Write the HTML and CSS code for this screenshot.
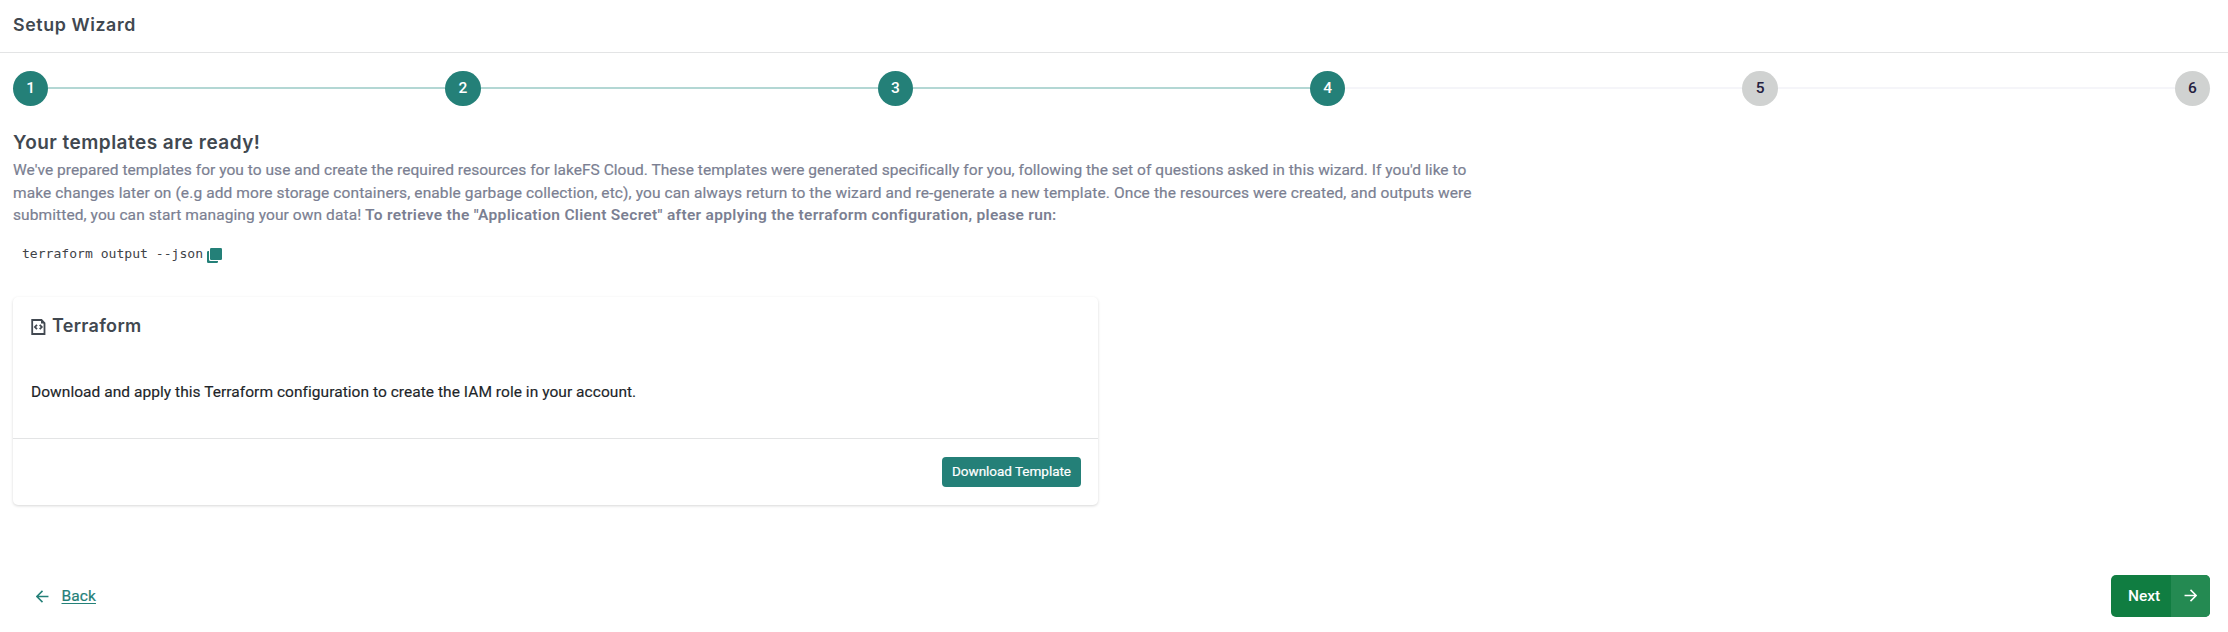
FILE: index.html
```
<!DOCTYPE html>
<html lang="en">
<head>
<meta charset="utf-8">
<title>Setup Wizard</title>
<link rel="stylesheet" href="styles.css">
</head>
<body>
<header class="header"><h1 class="header-title"><span>Setup Wizard</span></h1></header>
<main class="wizard">
  <ol class="steps">
    <li class="step done">1</li>
    <li class="bar filled"></li>
    <li class="step done">2</li>
    <li class="bar filled"></li>
    <li class="step done">3</li>
    <li class="bar filled"></li>
    <li class="step done">4</li>
    <li class="bar"></li>
    <li class="step">5</li>
    <li class="bar"></li>
    <li class="step">6</li>
  </ol>
  <h2 class="title"><span>Your templates are ready!</span></h2>
  <p class="intro"><span class="line-a">We've prepared templates for you to use and create the required resources for lakeFS Cloud. These templates were generated specifically for you, following the set of questions asked in this wizard. If you'd like to</span><br>
  <span class="line-b">make changes later on (e.g add more storage containers, enable garbage collection, etc), you can always return to the wizard and re-generate a new template. Once the resources were created, and outputs were</span><br>
  <span class="line-c">submitted, you can start managing your own data!</span> <strong>To retrieve the "Application Client Secret" after applying the terraform configuration, please run:</strong></p>
  <div class="command">
    <code>terraform output --json</code>
    <svg class="copy" viewBox="0 0 15 15"><path d="M2 3H1.2Q0 3 0 4.2V13.8Q0 15 1.2 15H9.800Q11 15 11 13.800V13H3.500Q2 13 2 11.500Z"/><rect x="3" y="0" width="12" height="12" rx="1.200"/></svg>
  </div>
  <section class="card">
    <div class="card-body">
      <h3 class="card-title">
        <svg class="file" viewBox="0 0 15 16"><path d="M1.200 1H10.500L13.500 4V15H1.200Z"/><path class="corner" d="M10 1V4.500H13.500Z"/><path d="M6 5.800L3.900 8L6 10.200M8.700 5.800L10.800 8L8.700 10.200"/></svg>
        <span>Terraform</span>
      </h3>
      <p class="card-text"><span>Download and apply this Terraform configuration to create the IAM role in your account.</span></p>
    </div>
    <div class="card-footer"><button class="download"><span>Download Template</span></button></div>
  </section>
  <nav class="actions">
    <a class="back"><svg class="arrow" viewBox="0 0 12 12"><path d="M11.500 6H1M6 .8L.8 6L6 11.200"/></svg><span>Back</span></a>
    <button class="next"><span class="next-label"><span>Next</span></span><span class="next-icon"><svg class="arrow" viewBox="0 0 12 12"><path d="M.5 6H11M6 .8L11.200 6L6 11.200"/></svg></span></button>
  </nav>
</main>
</body>
</html>
```
FILE: styles.css
```
* { box-sizing: border-box; }
body { margin: 0; background: #fff; font: 15.500px/22.5px Roboto, "Liberation Sans", sans-serif; color: #212529; }
h1, h2, h3, p, ol { margin: 0; padding: 0; }
button { border: 0; padding: 0; font: inherit; color: #fff; }
svg { display: block; flex: none; }
.header { height: 53px; padding: 13px 13px 0; border-bottom: 1px solid #e3e4e5; }
.header-title { font: 600 17.800px/24px Inter, sans-serif; color: #414850; letter-spacing: .6px; }
.wizard { padding: 18px 18px 0 13px; }
.steps { display: flex; align-items: center; height: 35px; list-style: none; }
.step { flex: none; width: 35.200px; height: 35px; border-radius: 50%; background: #d0d2d1; color: #24203f; font: 500 15.500px/34px Roboto, sans-serif; text-align: center; }
.step.done { background: #248078; color: #fff; }
.bar { flex: 1; height: 2px; margin-bottom: 1px; background: #f5f5f9; }
.bar.filled { background: #b3d7d4; }
.title { margin-top: 24px; font: 600 19px/26px Inter, sans-serif; color: #414850; letter-spacing: .47px; }
.intro { margin-top: 3px; color: #7b7f92; white-space: nowrap; -webkit-text-stroke: .2px #7b7f92; }
.line-a { letter-spacing: .037px; }
.line-b { letter-spacing: .11px; }
.line-c { letter-spacing: .09px; }
.intro strong { font-weight: 600; letter-spacing: .31px; -webkit-text-stroke: 0; }
.command { display: flex; gap: 4px; padding: 15px 0 0 9px; height: 53px; }
.command code { font: 13.080px/23px "DejaVu Sans Mono", monospace; color: #3f4348; }
.copy { width: 15px; height: 15px; margin-top: 6px; fill: #248078; }
.card { width: 1085px; height: 208px; margin-top: 17px; border-radius: 5px; box-shadow: 0 1px 3px rgba(0,0,0,.16); }
.card-body { height: 142px; padding: 16px 19px 0 18px; border-bottom: 1px solid #e3e4e5; }
.card-title { display: flex; gap: 6px; height: 25px; font: 600 18px/25px Inter, sans-serif; letter-spacing: .3px; color: #414850; }
.file { width: 15px; height: 16px; margin-top: 6px; fill: none; stroke: #414850; stroke-width: 1.800; }
.file .corner { fill: #414850; stroke: none; }
.card-text { margin-top: 43px; letter-spacing: .045px; white-space: nowrap; -webkit-text-stroke: .15px #212529; }
.card-footer { display: flex; justify-content: flex-end; padding: 18px 17px 0 0; }
.download { width: 139px; height: 30px; border-radius: 4px; background: #248078; font-size: 13.500px; letter-spacing: -.02px; -webkit-text-stroke: .2px #fff; }
.actions { display: flex; justify-content: space-between; margin-top: 70px; height: 42px; }
.back { display: flex; align-items: center; gap: 13px; padding: 1px 0 0 22.500px; color: #248078; letter-spacing: .1px; -webkit-text-stroke: .2px #248078; }
.back span { text-decoration: underline; text-underline-offset: 2px; text-decoration-skip-ink: none; }
.arrow { width: 13px; height: 13px; fill: none; stroke: currentColor; stroke-width: 1.400; }
.next { display: flex; width: 99px; height: 42px; border-radius: 5px; overflow: hidden; background: #107d41; font-weight: 500; }
.next-label { width: 60px; line-height: 43px; padding-left: 17px; text-align: left; }
.next-icon { display: flex; flex: 1; align-items: center; justify-content: center; background: #248a52; }
```
